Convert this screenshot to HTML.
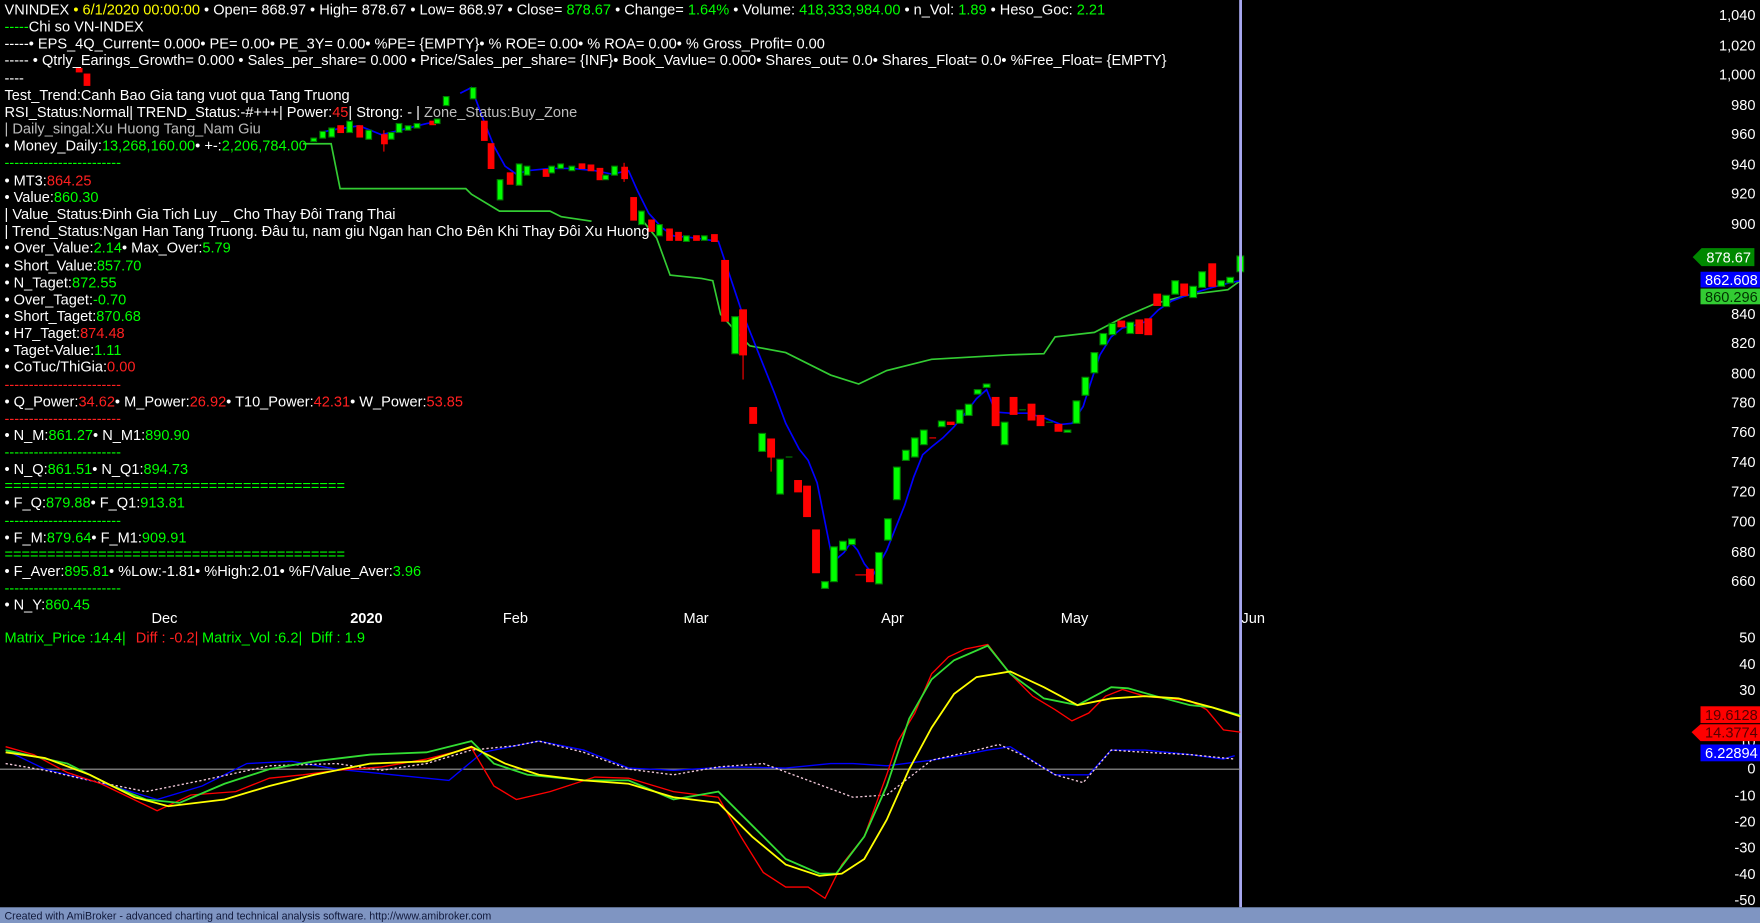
<!DOCTYPE html>
<html><head><meta charset="utf-8"><style>
html,body{margin:0;padding:0;background:#000;overflow:hidden}
svg{display:block}
text{font-family:"Liberation Sans",Arial,sans-serif;font-size:13px;fill:#fff}
.g{fill:#00ff00}.r{fill:#ff2020}.y{fill:#ffff00}.s{fill:#bdbdbd}
.ax{text-anchor:end}
</style></head><body>
<svg width="1760" height="923" viewBox="0 0 1568 822" preserveAspectRatio="none" xmlns="http://www.w3.org/2000/svg">
<rect width="1568" height="822" fill="#000"/>
<polyline fill="none" stroke="#33cc33" stroke-width="1.5" points="270,128 295,128 303,168 415,168 420,173 445,188 490,188 500,193 527,197"/>
<polyline fill="none" stroke="#33cc33" stroke-width="1.5" points="573,197 585,212 597,245 625,248 635,250 642,280 660,300 668,308 700,314 740,334 765,342 790,330 830,320 900,316 930,315 940,300 975,296 1000,283 1030,270 1062,262 1094,258 1105,250"/>
<polyline fill="none" stroke="#0000ff" stroke-width="1.5" points="285,118 300,115 320,112 340,120 360,115 380,110 392,108"/>
<polyline fill="none" stroke="#0000ff" stroke-width="1.5" points="410,83 420,78 430,105 440,130 450,148 460,155 470,152 490,150 510,150 530,152 545,155 560,152 568,170 578,190 590,203 600,210 620,212 640,215 650,245 660,275 670,300 680,325 690,350 700,377 712,400 720,410 728,430 735,465 740,490 745,498 752,492 758,483 764,490 770,502 778,512 790,490 798,470 806,450 814,425 822,405 830,398 840,390 850,380 860,368 870,355 879,347 887,367 900,368 915,368 930,372 945,378 955,377 965,362 972,340 980,316 990,300 1000,292 1010,290 1022,286 1032,276 1044,268 1060,262 1080,256 1095,252 1105,250"/>
<g stroke-width="1">
<g fill="#ff0000" stroke="#ff0000">
<rect x="68" y="61" width="5" height="3"/><rect x="75" y="66" width="5" height="10"/>
<rect x="301" y="112" width="5" height="6"/><rect x="318" y="112" width="5" height="10"/><rect x="340" y="120" width="5" height="8"/><line x1="342" y1="116" x2="342" y2="135"/><rect x="383" y="108" width="5" height="3"/>
<rect x="429" y="108" width="5" height="17"/><rect x="435" y="128" width="5" height="22"/><rect x="452" y="154" width="5" height="10"/><rect x="484" y="151" width="5" height="6"/><rect x="516" y="146" width="5" height="4"/><rect x="524" y="147" width="5" height="5"/><rect x="532" y="150" width="5" height="10"/><rect x="554" y="149" width="5" height="10"/><line x1="556" y1="145" x2="556" y2="162"/>
<rect x="562" y="176" width="5" height="20"/><rect x="578" y="196" width="5" height="10"/><rect x="594" y="204" width="5" height="10"/><rect x="602" y="207" width="5" height="7"/><rect x="618" y="210" width="5" height="4"/><rect x="634" y="209" width="5" height="6"/>
<rect x="643" y="232" width="6" height="54"/><rect x="659" y="276" width="6" height="40"/><line x1="662" y1="316" x2="662" y2="338"/>
<rect x="668" y="363" width="6" height="14"/><rect x="684" y="391" width="6" height="16"/><line x1="687" y1="407" x2="687" y2="420"/><rect x="708" y="428" width="6" height="10"/><rect x="716" y="433" width="6" height="27"/><rect x="724" y="472" width="6" height="38"/>
<line x1="762" y1="512" x2="772" y2="512"/><rect x="772" y="507" width="6" height="11"/><line x1="828" y1="390" x2="834" y2="390"/><rect x="844" y="376" width="6" height="2"/>
<rect x="884" y="354" width="6" height="25"/><rect x="900" y="354" width="6" height="15"/><rect x="916" y="360" width="6" height="14"/><rect x="924" y="370" width="6" height="9"/><rect x="940" y="378" width="6" height="6"/>
<rect x="996" y="286" width="6" height="5"/><rect x="1012" y="285" width="6" height="12"/><rect x="1020" y="284" width="6" height="14"/><rect x="1028" y="262" width="6" height="10"/><rect x="1052" y="253" width="6" height="10"/><rect x="1077" y="235" width="6" height="20"/>
</g>
<g fill="#00ff00" stroke="#008000">
<rect x="277" y="123" width="5" height="3"/><rect x="285" y="117" width="5" height="6"/><rect x="293" y="114" width="5" height="8"/><rect x="309" y="108" width="5" height="10"/><rect x="326" y="116" width="5" height="8"/><rect x="346" y="118" width="5" height="6"/><rect x="353" y="110" width="5" height="8"/><rect x="361" y="112" width="5" height="4"/><rect x="369" y="110" width="5" height="4"/><rect x="387" y="106" width="5" height="4"/>
<rect x="395" y="86" width="5" height="8"/><rect x="419" y="78" width="5" height="10"/>
<rect x="443" y="160" width="5" height="18"/><rect x="460" y="146" width="5" height="19"/><rect x="467" y="148" width="5" height="8"/><rect x="489" y="148" width="5" height="6"/><rect x="497" y="146" width="5" height="4"/><rect x="507" y="148" width="5" height="4"/><rect x="537" y="156" width="5" height="4"/><rect x="545" y="148" width="5" height="8"/>
<rect x="569" y="188" width="5" height="12"/><rect x="585" y="200" width="5" height="10"/><rect x="609" y="210" width="5" height="5"/><rect x="625" y="210" width="5" height="4"/>
<rect x="652" y="282" width="6" height="33"/><rect x="676" y="386" width="6" height="16"/><rect x="692" y="409" width="6" height="31"/><line x1="700" y1="407" x2="706" y2="407"/>
<rect x="732" y="518" width="6" height="6"/><rect x="740" y="487" width="6" height="31"/><rect x="748" y="482" width="6" height="8"/><rect x="756" y="480" width="6" height="5"/><rect x="780" y="492" width="6" height="28"/>
<rect x="788" y="462" width="6" height="19"/><rect x="796" y="416" width="6" height="29"/><rect x="804" y="401" width="6" height="9"/><rect x="812" y="390" width="6" height="17"/><rect x="820" y="383" width="6" height="13"/><rect x="836" y="375" width="6" height="5"/><rect x="852" y="365" width="6" height="12"/><rect x="860" y="360" width="6" height="10"/><rect x="868" y="347" width="6" height="4"/><rect x="876" y="342" width="6" height="3"/>
<rect x="892" y="376" width="6" height="20"/><line x1="908" y1="365" x2="914" y2="365"/><line x1="932" y1="376" x2="938" y2="376"/><rect x="948" y="383" width="6" height="2"/>
<rect x="956" y="357" width="6" height="20"/><rect x="964" y="336" width="6" height="16"/><rect x="972" y="314" width="6" height="18"/><rect x="980" y="297" width="6" height="10"/><rect x="988" y="288" width="6" height="10"/><rect x="1004" y="287" width="6" height="10"/>
<rect x="1036" y="263" width="6" height="10"/><rect x="1044" y="250" width="6" height="12"/><rect x="1060" y="255" width="6" height="10"/><rect x="1068" y="242" width="6" height="14"/><rect x="1085" y="250" width="6" height="5"/><rect x="1093" y="247" width="6" height="5"/><rect x="1102" y="228" width="6" height="14"/>
</g>
</g>
<rect x="1104" y="0" width="2.5" height="808" fill="#a8a8f0"/>
<text x="4" y="13">VNINDEX <tspan class="y">• 6/1/2020 00:00:00</tspan> • Open= 868.97 • High= 878.67 • Low= 868.97 • Close= <tspan class="g">878.67</tspan> • Change= <tspan class="g">1.64%</tspan> • Volume: <tspan class="g">418,333,984.00</tspan> • n_Vol: <tspan class="g">1.89</tspan> • Heso_Goc: <tspan class="g">2.21</tspan></text>
<text x="4" y="28"><tspan class="g">-----</tspan>Chi so VN-INDEX</text>
<text x="4" y="43">-----• EPS_4Q_Current= 0.000• PE= 0.00• PE_3Y= 0.00• %PE= {EMPTY}• % ROE= 0.00• % ROA= 0.00• % Gross_Profit= 0.00</text>
<text x="4" y="58">----- • Qtrly_Earings_Growth= 0.000 • Sales_per_share= 0.000 • Price/Sales_per_share= {INF}• Book_Vavlue= 0.000• Shares_out= 0.0• Shares_Float= 0.0• %Free_Float= {EMPTY}</text>
<text x="4" y="74">----</text>
<text x="4" y="89">Test_Trend:Canh Bao Gia tang vuot qua Tang Truong</text>
<text x="4" y="104">RSI_Status:Normal| TREND_Status:-#+++| Power:<tspan class="r">45</tspan>| Strong: - | <tspan class="s">Zone_Status:Buy_Zone</tspan></text>
<text x="4" y="119" class="s">| Daily_singal:Xu Huong Tang_Nam Giu</text>
<text x="4" y="134">• Money_Daily:<tspan class="g">13,268,160.00</tspan>• +-:<tspan class="g">2,206,784.00</tspan></text>
<text x="4" y="149" class="g">------------------------</text>
<text x="4" y="165">• MT3:<tspan class="r">864.25</tspan></text>
<text x="4" y="180">• Value:<tspan class="g">860.30</tspan></text>
<text x="4" y="195">| Value_Status:Đinh Gia Tich Luy _ Cho Thay Đôi Trang Thai</text>
<text x="4" y="210">| Trend_Status:Ngan Han Tang Truong. Đâu tu, nam giu Ngan han Cho Đên Khi Thay Đôi Xu Huong</text>
<text x="4" y="225">• Over_Value:<tspan class="g">2.14</tspan>• Max_Over:<tspan class="g">5.79</tspan></text>
<text x="4" y="241">• Short_Value:<tspan class="g">857.70</tspan></text>
<text x="4" y="256">• N_Taget:<tspan class="g">872.55</tspan></text>
<text x="4" y="271">• Over_Taget:<tspan class="g">-0.70</tspan></text>
<text x="4" y="286">• Short_Taget:<tspan class="g">870.68</tspan></text>
<text x="4" y="301">• H7_Taget:<tspan class="r">874.48</tspan></text>
<text x="4" y="316">• Taget-Value:<tspan class="g">1.11</tspan></text>
<text x="4" y="331">• CoTuc/ThiGia:<tspan class="r">0.00</tspan></text>
<text x="4" y="347" class="r">------------------------</text>
<text x="4" y="362">• Q_Power:<tspan class="r">34.62</tspan>• M_Power:<tspan class="r">26.92</tspan>• T10_Power:<tspan class="r">42.31</tspan>• W_Power:<tspan class="r">53.85</tspan></text>
<text x="4" y="377" class="r">------------------------</text>
<text x="4" y="392">• N_M:<tspan class="g">861.27</tspan>• N_M1:<tspan class="g">890.90</tspan></text>
<text x="4" y="407" class="g">------------------------</text>
<text x="4" y="422">• N_Q:<tspan class="g">861.51</tspan>• N_Q1:<tspan class="g">894.73</tspan></text>
<text x="4" y="437" class="g">========================================</text>
<text x="4" y="452">• F_Q:<tspan class="g">879.88</tspan>• F_Q1:<tspan class="g">913.81</tspan></text>
<text x="4" y="468" class="g">------------------------</text>
<text x="4" y="483">• F_M:<tspan class="g">879.64</tspan>• F_M1:<tspan class="g">909.91</tspan></text>
<text x="4" y="498" class="g">========================================</text>
<text x="4" y="513">• F_Aver:<tspan class="g">895.81</tspan>• %Low:-1.81• %High:2.01• %F/Value_Aver:<tspan class="g">3.96</tspan></text>
<text x="4" y="528" class="g">------------------------</text>
<text x="4" y="543">• N_Y:<tspan class="g">860.45</tspan></text>
<text x="1564" y="18" class="ax">1,040</text><text x="1564" y="45" class="ax">1,020</text><text x="1564" y="71" class="ax">1,000</text><text x="1564" y="98" class="ax">980</text><text x="1564" y="124" class="ax">960</text><text x="1564" y="151" class="ax">940</text><text x="1564" y="177" class="ax">920</text><text x="1564" y="204" class="ax">900</text><text x="1564" y="284" class="ax">840</text><text x="1564" y="310" class="ax">820</text><text x="1564" y="337" class="ax">800</text><text x="1564" y="363" class="ax">780</text><text x="1564" y="389" class="ax">760</text><text x="1564" y="416" class="ax">740</text><text x="1564" y="442" class="ax">720</text><text x="1564" y="469" class="ax">700</text><text x="1564" y="496" class="ax">680</text><text x="1564" y="522" class="ax">660</text>
<polygon points="1508,229 1516,221 1563,221 1563,237 1516,237" fill="#008800"/>
<text x="1560" y="234" class="ax">878.67</text>
<rect x="1515" y="242" width="53" height="14" fill="#0000ff"/><text x="1566" y="254" class="ax">862.608</text>
<rect x="1515" y="257" width="53" height="14" fill="#33cc33"/><text x="1566" y="269" class="ax" style="fill:#003300">860.296</text>
<text x="135" y="555">Dec</text><text x="312" y="555" style="font-weight:bold">2020</text><text x="448" y="555">Feb</text><text x="609" y="555">Mar</text><text x="785" y="555">Apr</text><text x="945" y="555">May</text><text x="1106" y="555">Jun</text>
<text x="4" y="572" class="g">Matrix_Price :14.4|</text>
<text x="121" y="572" class="r">Diff : -0.2|</text>
<text x="180" y="572" class="g">Matrix_Vol :6.2|</text>
<text x="277" y="572" class="g">Diff : 1.9</text>
<line x1="0" y1="685" x2="1105" y2="685" stroke="#9a9a9a" stroke-width="1"/>
<g fill="none" stroke-width="1.2">
<polyline stroke="#0000ff" points="5,668 40,685 100,700 140,712 180,700 220,680 260,678 300,685 350,690 400,695 430,670 460,664 480,660 520,668 560,684 600,686 650,683 700,684 740,680 760,680 790,682 830,677 860,672 880,668 900,665 940,690 970,690 990,668 1020,668 1060,672 1090,676 1100,673"/>
<polyline stroke="#f0c8d8" stroke-dasharray="2,2" points="5,680 40,686 80,695 130,705 180,695 240,682 300,680 340,686 380,680 420,668 460,664 480,660 520,670 560,685 600,690 640,683 680,680 720,695 760,710 790,708 830,677 870,668 890,663 910,672 940,690 965,697 990,668 1020,670 1060,672 1100,676"/>
<polyline stroke="#ff0000" points="5,665 30,672 60,688 90,698 140,722 170,708 210,705 240,693 270,690 300,686 340,683 380,676 420,666 440,700 460,712 490,705 530,692 560,693 600,705 640,710 660,745 680,777 700,790 720,790 735,800 750,770 770,745 790,690 800,660 815,635 830,600 845,585 860,578 880,574 900,600 920,620 940,632 955,642 970,635 985,620 1000,614 1020,620 1040,622 1060,624 1075,632 1090,650 1105,652"/>
<polyline stroke="#33dd33" stroke-width="1.6" points="5,668 60,680 100,700 130,712 160,715 200,698 240,685 280,678 330,672 380,670 420,660 440,680 470,690 520,695 560,695 600,712 640,705 670,735 700,765 730,778 745,778 770,745 790,700 810,640 830,605 850,588 880,575 900,600 930,622 960,628 990,612 1005,613 1030,620 1060,628 1080,630 1105,637"/>
<polyline stroke="#ffff00" stroke-width="1.6" points="5,670 40,675 80,690 120,710 150,718 200,712 240,700 280,690 330,680 380,678 420,665 450,680 480,690 520,695 560,698 600,710 640,715 670,745 700,770 730,780 750,778 770,765 790,730 810,685 830,648 850,618 870,603 900,598 930,612 960,628 990,622 1020,620 1050,622 1080,630 1105,638"/>
</g>
<text x="1564" y="572" class="ax">50</text><text x="1564" y="596" class="ax">40</text><text x="1564" y="619" class="ax">30</text><text x="1564" y="665" class="ax">10</text><text x="1564" y="689" class="ax">0</text><text x="1564" y="713" class="ax">-10</text><text x="1564" y="736" class="ax">-20</text><text x="1564" y="759" class="ax">-30</text><text x="1564" y="783" class="ax">-40</text><text x="1564" y="806" class="ax">-50</text>
<rect x="1515" y="629" width="53" height="15" fill="#ff0000"/><text x="1566" y="641" class="ax" style="fill:#550000">19.6128</text>
<polygon points="1507,652 1515,645 1568,645 1568,660 1515,660" fill="#ff0000"/><text x="1566" y="657" class="ax" style="fill:#550000">14.3774</text>
<rect x="1515" y="663" width="53" height="15" fill="#0000ff"/><text x="1566" y="675" class="ax">6.22894</text>
<rect x="0" y="808" width="1568" height="14" fill="#7f95c2"/>
<text x="4" y="819" style="font-size:9.5px;fill:#10183a">Created with AmiBroker - advanced charting and technical analysis software. http://www.amibroker.com</text>
</svg>
</body></html>
